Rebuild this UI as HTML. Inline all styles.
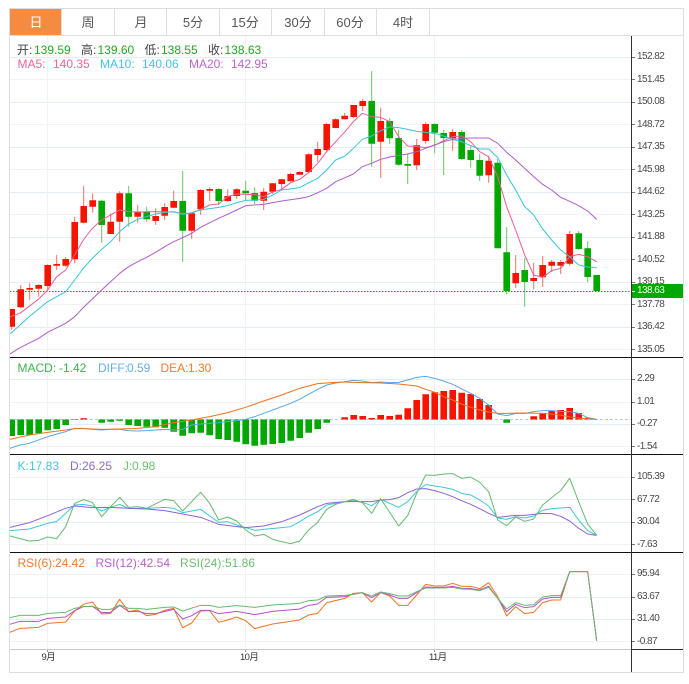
<!DOCTYPE html>
<html><head><meta charset="utf-8"><style>
html,body{margin:0;padding:0;background:#fff}
body{width:689px;height:684px;position:relative;overflow:hidden;font-family:"Liberation Sans","Noto Sans CJK SC",sans-serif}
svg{position:absolute;left:0;top:0}
.t{position:absolute;top:10px;height:25px;line-height:25px;width:52px;text-align:center;font-size:13px;color:#555}
.a{position:absolute;left:637px;font-size:10px;line-height:12px;color:#4a4a4a;letter-spacing:-.55px}
.s{position:absolute;font-size:12px;line-height:14px;white-space:nowrap}
.x{position:absolute;top:651px;font-size:9.5px;line-height:13px;color:#333;white-space:nowrap;letter-spacing:-.6px}
</style></head><body>
<svg width="689" height="684" viewBox="0 0 689 684">
<defs><clipPath id="c"><rect x="10" y="36" width="621" height="636"/></clipPath></defs>
<rect x="9.5" y="8.5" width="674" height="664" fill="#fff" stroke="#dedede"/>
<rect x="10" y="9" width="51.5" height="26" fill="#f58b40"/>
<path d="M61.5 9V35M114.5 9V35M166.5 9V35M219.5 9V35M271.5 9V35M324.5 9V35M376.5 9V35M429.5 9V35M10 35.5H683" stroke="#dedede" fill="none"/>
<path d="M10 57.5H631M10 102.5H631M10 147.5H631M10 192.5H631M10 237.5H631M10 282.5H631M10 327.5H631M10 379.5H631M10 424.5H631M10 499.5H631M10 522.5H631M10 597.5H631M10 619.5H631" stroke="#e6edf2" fill="none"/>
<path d="M10 79.5H631M10 124.5H631M10 169.5H631M10 214.5H631M10 259.5H631M10 304.5H631M10 349.5H631M10 402.5H631M10 446.5H631M10 477.5H631M10 544.5H631M10 574.5H631M10 641.5H631M47.5 36V649M245.5 36V649M434.5 36V649" stroke="#eff3f6" fill="none"/>
<path d="M10 649.5H631" stroke="#c8c8c8" fill="none"/>
<path d="M47.5 650V652M245.5 650V652M434.5 650V652" stroke="#999" fill="none"/>
<path d="M10 357.5H683M10 454.5H683M10 552.5H683" stroke="#111" fill="none"/>
<path d="M631 649.5H683" stroke="#333" fill="none"/>
<path d="M631.5 36V672" stroke="#333" fill="none"/>
<path d="M632 57.5h3M632 79.5h3M632 102.5h3M632 124.5h3M632 147.5h3M632 169.5h3M632 192.5h3M632 214.5h3M632 237.5h3M632 259.5h3M632 282.5h3M632 304.5h3M632 327.5h3M632 349.5h3M632 379.5h3M632 402.5h3M632 424.5h3M632 446.5h3M632 477.5h3M632 499.5h3M632 522.5h3M632 544.5h3M632 574.5h3M632 597.5h3M632 619.5h3M632 641.5h3" stroke="#777" fill="none"/>
<g clip-path="url(#c)" fill="none">
<path d="M10 291.5H631" stroke="#1a9a1a" stroke-dasharray="1.5 1.5"/>
<path d="M10 419.5H631" stroke="#a9d4ea" stroke-dasharray="3 2"/>
<path stroke="#f57060" d="M11.7 309V330M20.7 285V308.3M29.7 283.3V300M38.7 284V296.7M47.7 264.3V290M56.7 255V270M65.7 257V266.7M74.7 216.7V263.3M83.7 186V223.3M92.7 193.3V212.7M110.7 213.5V234M119.7 191.3V241.7M137.7 205V222.7M155.7 208.3V225M164.7 203.3V220M173.7 190.7V208.3M191.7 213V239M200.7 189.3V215M209.7 187.3V201M227.7 189.3V201.7M236.7 188.3V198.7M263.7 188.3V210M272.7 183.3V194M281.7 178.7V190M290.7 172.7V181.7M299.7 171.3V175M308.7 153.3V172.7M317.7 141.7V161.7M326.7 122.7V151.7M335.7 118.3V128.3M344.7 113V119.3M353.7 105V118.3M362.7 98.7V111M380.7 107.7V177.7M416.7 139V170M425.7 122.3V143.7M452.7 129V150.7M488.7 155.7V182.7M515.7 255V288M533.7 262.7V289.3M542.7 256V286.7M551.7 260V272M560.7 260V274M569.7 231V265.7"/>
<path stroke="#66c466" d="M101.7 200V242.7M128.7 186V226.7M146.7 206.7V221.7M182.7 171V262M218.7 188.3V205M245.7 180.7V200M254.7 187.3V204M371.7 71V166.7M389.7 118.3V144M398.7 130V165.7M407.7 154.3V184M434.7 123.3V153.3M443.7 130V175M461.7 130V160M470.7 145V167.7M479.7 153.7V181M497.7 159.3V248.3M506.7 227V294M524.7 258V306.7M578.7 231V250M587.7 241.3V282"/>
<path stroke="#f51400" stroke-width="6.6" d="M11.7 309V326.7M20.7 289.3V307.3M29.7 288V289.7M38.7 285V288.7M47.7 265V286M56.7 264V265.7M65.7 259V265.7M74.7 222V259.3M83.7 206V222.7M92.7 200.3V206.7M110.7 221.7V234M119.7 193.3V221.7M137.7 211.7V216.7M155.7 216V221M164.7 207V215.7M173.7 201V207.7M191.7 213.3V230.7M200.7 190V209.3M209.7 189V190.7M227.7 196V201M236.7 189.3V196M263.7 191.7V200.7M272.7 183.3V191.7M281.7 179.3V184M290.7 174V181.3M299.7 172V174.7M308.7 154.3V172M317.7 149V155M326.7 124V150M335.7 119.3V128M344.7 115.7V119.3M353.7 105V117M362.7 101V106M380.7 121V141.7M416.7 145.3V165.3M425.7 124V141M452.7 132V138.3M488.7 160.7V175.3M515.7 273V283.3M533.7 278V281M542.7 265V277.3M551.7 261.7V265.7M560.7 262V265.7M569.7 234V263.7"/>
<path stroke="#00a800" stroke-width="6.6" d="M101.7 200.7V225M128.7 193.3V216.7M146.7 211.7V219.3M182.7 201V230.7M218.7 189V201M245.7 190.7V193.3M254.7 193V200.7M371.7 101V143.7M389.7 121V138.3M398.7 138V164.7M407.7 164V165.7M434.7 124V132.7M443.7 133V138M461.7 132V159M470.7 150V160M479.7 160V175.7M497.7 162.7V248.3M506.7 252.3V291M524.7 270V282M578.7 233.3V249M587.7 248.3V277M596.7 275V291"/>
<path stroke="#00a800" stroke-width="6.6" d="M11.7 419.5V436M20.7 419.5V435M29.7 419.5V435M38.7 419.5V433.3M47.7 419.5V430.3M56.7 419.5V429M65.7 419.5V425M74.7 419.5V420M101.7 419.5V422.7M110.7 419.5V421.7M119.7 419.5V420.7M128.7 419.5V425M137.7 419.5V426M146.7 419.5V426.7M155.7 419.5V427.3M164.7 419.5V427.7M173.7 419.5V431.7M182.7 419.5V435.7M191.7 419.5V433.3M200.7 419.5V432.7M209.7 419.5V435.3M218.7 419.5V439M227.7 419.5V440M236.7 419.5V441.7M245.7 419.5V444.3M254.7 419.5V445.7M263.7 419.5V444.7M272.7 419.5V444M281.7 419.5V443M290.7 419.5V440.7M299.7 419.5V438M308.7 419.5V432.7M317.7 419.5V429M326.7 419.5V422.7M506.7 419.5V422.7"/>
<path stroke="#f51400" stroke-width="6.6" d="M83.7 419.5V418.3M344.7 419.5V417.3M353.7 419.5V415M362.7 419.5V416M371.7 419.5V418M380.7 419.5V415M389.7 419.5V416M398.7 419.5V414.7M407.7 419.5V408.3M416.7 419.5V400M425.7 419.5V394.3M434.7 419.5V392.3M443.7 419.5V391M452.7 419.5V390M461.7 419.5V392.7M470.7 419.5V394M479.7 419.5V399M488.7 419.5V405M533.7 419.5V416.3M542.7 419.5V413M551.7 419.5V411M560.7 419.5V410M569.7 419.5V408M578.7 419.5V413M587.7 419.5V417.7"/>
</g>
<g clip-path="url(#c)"><g transform="scale(.33333)" fill="none" stroke-width="3" stroke-linejoin="round">
<polyline stroke="#ee5c90" points="30,950 60,940 116,897 143,870 170,830 197,810 224,765 250,720 277,685 305,660 332,645 359,630 386,635 413,636 467,635 521,636 548,640 575,640 602,628 629,615 656,612 683,590 710,582 737,583 764,584 791,590 818,576 845,568 872,548 899,538 926,518 953,490 980,455 1007,425 1035,395 1060,365 1087,340 1115,350 1142,352 1169,365 1196,410 1223,438 1250,440 1277,443 1304,436 1331,422 1358,410 1385,408 1412,425 1439,455 1466,470 1493,530 1520,620 1547,690 1574,765 1601,825 1628,832 1655,812 1682,805 1709,770 1736,763 1763,770 1790,785"/>
<polyline stroke="#35c6dd" points="30,1002 60,975 90,948 143,905 197,875 224,840 250,805 277,775 305,748 332,725 359,695 386,672 413,658 440,650 467,642 494,637 521,635 548,643 575,638 602,630 629,626 656,622 683,617 710,608 737,601 764,600 791,598 818,585 845,570 899,563 926,548 953,535 980,510 1007,480 1035,468 1060,445 1087,418 1115,408 1142,392 1169,381 1196,383 1223,388 1250,394 1277,397 1304,400 1331,408 1358,418 1385,425 1412,437 1439,447 1466,447 1493,472 1520,525 1547,570 1574,620 1601,645 1628,687 1655,720 1682,750 1709,770 1736,795 1763,801 1790,803"/>
<polyline stroke="#b05ccc" points="30,1062 60,1043 116,1015 143,997 197,970 224,950 250,923 277,897 305,870 332,845 359,820 386,800 413,785 440,772 467,757 494,740 521,725 548,713 575,700 602,682 629,668 656,655 683,643 710,630 737,617 791,613 818,608 845,603 900,595 926,590 953,578 980,565 1007,545 1035,533 1060,522 1087,500 1115,490 1142,478 1169,471 1196,466 1223,462 1250,455 1277,445 1304,435 1331,425 1358,418 1385,415 1412,414 1439,414 1466,414 1493,430 1520,457 1547,480 1574,505 1601,530 1628,553 1655,570 1682,592 1709,604 1736,617 1763,633 1790,658"/>
<polyline stroke="#58a8ea" points="30,1345 60,1335 88,1330 143,1310 197,1295 224,1285 250,1285 277,1288 305,1290 332,1288 359,1288 386,1292 413,1293 440,1292 467,1290 494,1288 521,1290 548,1288 575,1275 602,1272 656,1268 710,1262 737,1258 764,1250 791,1240 818,1230 845,1220 872,1210 899,1198 926,1183 953,1168 980,1155 1007,1149 1035,1145 1060,1141 1087,1143 1115,1148 1142,1146 1169,1148 1196,1147 1223,1140 1250,1132 1277,1129 1304,1135 1331,1143 1358,1153 1385,1167 1412,1180 1439,1195 1466,1215 1493,1242 1520,1247 1547,1240 1574,1240 1601,1235 1628,1232 1655,1232 1682,1234 1709,1235 1736,1240 1763,1253 1790,1258"/>
<polyline stroke="#f3701c" points="30,1318 88,1305 143,1297 197,1290 224,1286 250,1286 305,1288 359,1287 413,1285 467,1280 521,1268 575,1260 629,1250 683,1238 737,1222 791,1203 845,1185 899,1165 953,1151 1007,1147 1035,1146 1060,1147 1142,1149 1196,1152 1250,1158 1277,1168 1304,1177 1331,1190 1358,1200 1385,1212 1412,1222 1439,1230 1466,1236 1493,1240 1520,1240 1574,1239 1628,1240 1682,1245 1709,1251 1736,1254 1763,1257 1790,1258"/>
<polyline stroke="#3cc8de" points="30,1592 88,1587 143,1570 170,1564 197,1540 224,1515 250,1513 277,1518 305,1533 332,1522 359,1513 386,1525 440,1525 494,1522 521,1525 548,1538 602,1528 629,1548 656,1567 683,1565 710,1575 737,1583 764,1591 791,1588 845,1583 872,1580 899,1565 926,1548 953,1535 980,1515 1007,1510 1035,1505 1060,1502 1087,1507 1115,1517 1142,1498 1169,1510 1196,1522 1223,1505 1250,1475 1277,1454 1304,1458 1331,1462 1358,1468 1385,1480 1412,1485 1439,1500 1466,1518 1493,1554 1520,1558 1547,1550 1574,1554 1601,1548 1628,1531 1655,1526 1682,1524 1709,1522 1736,1560 1763,1592 1790,1606"/>
<polyline stroke="#8c63d4" points="30,1582 88,1568 143,1547 197,1525 224,1518 277,1523 332,1522 386,1525 440,1527 494,1532 548,1542 602,1552 656,1573 710,1580 737,1583 791,1578 845,1565 899,1545 953,1520 980,1510 1035,1505 1060,1505 1115,1505 1142,1500 1169,1499 1196,1493 1223,1478 1250,1467 1277,1466 1304,1472 1331,1480 1358,1490 1385,1502 1412,1513 1439,1526 1466,1540 1493,1552 1520,1549 1547,1546 1574,1546 1601,1543 1628,1540 1655,1541 1682,1549 1709,1563 1736,1585 1763,1602 1790,1606"/>
<polyline stroke="#66ba6e" points="30,1608 88,1623 116,1621 143,1611 170,1616 197,1580 224,1510 250,1499 277,1507 305,1550 332,1520 359,1492 386,1522 413,1520 440,1525 494,1498 521,1502 548,1533 602,1477 629,1510 656,1560 683,1551 710,1563 737,1590 764,1608 791,1603 818,1618 845,1625 872,1631 899,1623 926,1590 953,1567 980,1528 1007,1513 1035,1505 1060,1498 1087,1508 1115,1540 1142,1496 1196,1578 1223,1547 1250,1480 1277,1425 1304,1426 1331,1422 1358,1421 1385,1435 1412,1431 1439,1447 1466,1475 1493,1560 1520,1577 1547,1551 1574,1564 1601,1557 1628,1515 1655,1493 1682,1472 1709,1435 1736,1505 1763,1572 1790,1606"/>
<polyline stroke="#f5721e" points="30,1897 60,1885 116,1882 143,1870 197,1866 224,1833 250,1813 277,1806 305,1842 332,1840 359,1798 386,1835 413,1830 440,1847 467,1843 494,1831 521,1825 548,1883 575,1869 602,1833 629,1832 656,1867 683,1860 710,1851 737,1862 764,1886 818,1872 899,1860 926,1845 953,1840 980,1808 1035,1795 1060,1780 1087,1778 1115,1806 1142,1777 1169,1788 1196,1816 1223,1816 1250,1785 1277,1753 1304,1758 1331,1758 1358,1750 1385,1759 1412,1759 1439,1766 1466,1748 1493,1790 1520,1848 1547,1820 1574,1841 1601,1837 1628,1808 1655,1800 1682,1800 1709,1715 1763,1715 1790,1922"/>
<polyline stroke="#b252c8" points="30,1873 60,1864 116,1864 143,1855 197,1851 224,1832 250,1820 277,1819 305,1838 332,1837 359,1816 386,1835 413,1834 440,1841 467,1841 521,1828 548,1857 575,1847 602,1831 629,1831 656,1841 710,1834 764,1844 818,1834 899,1827 926,1816 953,1812 980,1792 1035,1790 1060,1782 1087,1778 1115,1793 1142,1778 1169,1785 1196,1795 1223,1795 1250,1778 1277,1761 1304,1762 1331,1762 1358,1759 1385,1765 1412,1766 1439,1770 1466,1759 1493,1795 1520,1835 1547,1813 1574,1823 1601,1820 1628,1797 1655,1792 1682,1792 1709,1715 1763,1715 1790,1922"/>
<polyline stroke="#68b870" points="30,1853 60,1846 116,1846 143,1840 197,1837 224,1825 250,1820 277,1819 305,1828 332,1828 359,1815 386,1825 413,1825 440,1828 494,1822 521,1821 548,1833 602,1816 629,1816 656,1822 710,1817 764,1822 818,1815 899,1810 926,1802 953,1800 980,1788 1035,1786 1060,1783 1087,1778 1115,1788 1142,1776 1169,1781 1196,1788 1223,1788 1250,1775 1277,1764 1304,1764 1331,1764 1358,1762 1385,1767 1412,1768 1439,1772 1466,1762 1493,1795 1520,1827 1547,1808 1574,1816 1601,1814 1628,1791 1655,1787 1682,1787 1709,1715 1763,1715 1790,1922"/>
</g></g>
<rect x="632" y="284" width="51" height="14" fill="#00a800"/>
<path d="M632 291.5h3" stroke="#fff" fill="none"/>
</svg>
<div class="t" style="left:10px;color:#fff">日</div>
<div class="t" style="left:62px">周</div>
<div class="t" style="left:115px">月</div>
<div class="t" style="left:167px">5分</div>
<div class="t" style="left:219px">15分</div>
<div class="t" style="left:272px">30分</div>
<div class="t" style="left:324px">60分</div>
<div class="t" style="left:377px">4时</div>
<div class="s" style="left:17px;top:43px;color:#444">开:</div><div class="s" style="left:34px;top:43px;color:#22a822">139.59</div>
<div class="s" style="left:81px;top:43px;color:#444">高:</div><div class="s" style="left:97.5px;top:43px;color:#22a822">139.60</div>
<div class="s" style="left:144.5px;top:43px;color:#444">低:</div><div class="s" style="left:161px;top:43px;color:#22a822">138.55</div>
<div class="s" style="left:208px;top:43px;color:#444">收:</div><div class="s" style="left:224.5px;top:43px;color:#22a822">138.63</div>
<div class="s" style="left:17.5px;top:56.5px;color:#f0649a">MA5:</div><div class="s" style="left:53px;top:56.5px;color:#f0649a">140.35</div>
<div class="s" style="left:100px;top:56.5px;color:#3fc8e6">MA10:</div><div class="s" style="left:142px;top:56.5px;color:#3fc8e6">140.06</div>
<div class="s" style="left:189px;top:56.5px;color:#bb66cc">MA20:</div><div class="s" style="left:231px;top:56.5px;color:#bb66cc">142.95</div>
<div class="s" style="left:17.5px;top:361px;color:#3cb44b">MACD:</div><div class="s" style="left:59px;top:361px;color:#3cb44b">-1.42</div>
<div class="s" style="left:98px;top:361px;color:#63aff0">DIFF:</div><div class="s" style="left:127px;top:361px;color:#63aff0">0.59</div>
<div class="s" style="left:160.5px;top:361px;color:#f47a30">DEA:</div><div class="s" style="left:188px;top:361px;color:#f47a30">1.30</div>
<div class="s" style="left:17.5px;top:458.5px;color:#3cc8e0">K:</div><div class="s" style="left:29px;top:458.5px;color:#3cc8e0">17.83</div>
<div class="s" style="left:70px;top:458.5px;color:#8a6bd0">D:</div><div class="s" style="left:82px;top:458.5px;color:#8a6bd0">26.25</div>
<div class="s" style="left:123px;top:458.5px;color:#6cc070">J:</div><div class="s" style="left:132px;top:458.5px;color:#6cc070">0.98</div>
<div class="s" style="left:17.5px;top:555.5px;color:#f57a30">RSI(6):</div><div class="s" style="left:55px;top:555.5px;color:#f57a30">24.42</div>
<div class="s" style="left:95.5px;top:555.5px;color:#b860cc">RSI(12):</div><div class="s" style="left:140px;top:555.5px;color:#b860cc">42.54</div>
<div class="s" style="left:180px;top:555.5px;color:#6cc070">RSI(24):</div><div class="s" style="left:225px;top:555.5px;color:#6cc070">51.86</div>
<div class="a" style="top:51px">152.82</div>
<div class="a" style="top:74px">151.45</div>
<div class="a" style="top:96px">150.08</div>
<div class="a" style="top:119px">148.72</div>
<div class="a" style="top:141px">147.35</div>
<div class="a" style="top:164px">145.98</div>
<div class="a" style="top:186px">144.62</div>
<div class="a" style="top:209px">143.25</div>
<div class="a" style="top:231px">141.88</div>
<div class="a" style="top:254px">140.52</div>
<div class="a" style="top:276px;clip-path:inset(0 0 4px 0)">139.15</div>
<div class="a" style="top:285px;color:#fff">138.63</div>
<div class="a" style="top:299px">137.78</div>
<div class="a" style="top:321px">136.42</div>
<div class="a" style="top:344px">135.05</div>
<div class="a" style="top:373px">2.29</div>
<div class="a" style="top:396px">1.01</div>
<div class="a" style="top:418px">-0.27</div>
<div class="a" style="top:441px">-1.54</div>
<div class="a" style="top:471px">105.39</div>
<div class="a" style="top:494px">67.72</div>
<div class="a" style="top:516px">30.04</div>
<div class="a" style="top:539px">-7.63</div>
<div class="a" style="top:568px">95.94</div>
<div class="a" style="top:591px">63.67</div>
<div class="a" style="top:613px">31.40</div>
<div class="a" style="top:636px">-0.87</div>
<div class="x" style="left:41.5px">9月</div>
<div class="x" style="left:240px">10月</div>
<div class="x" style="left:429px">11月</div>
</body></html>
